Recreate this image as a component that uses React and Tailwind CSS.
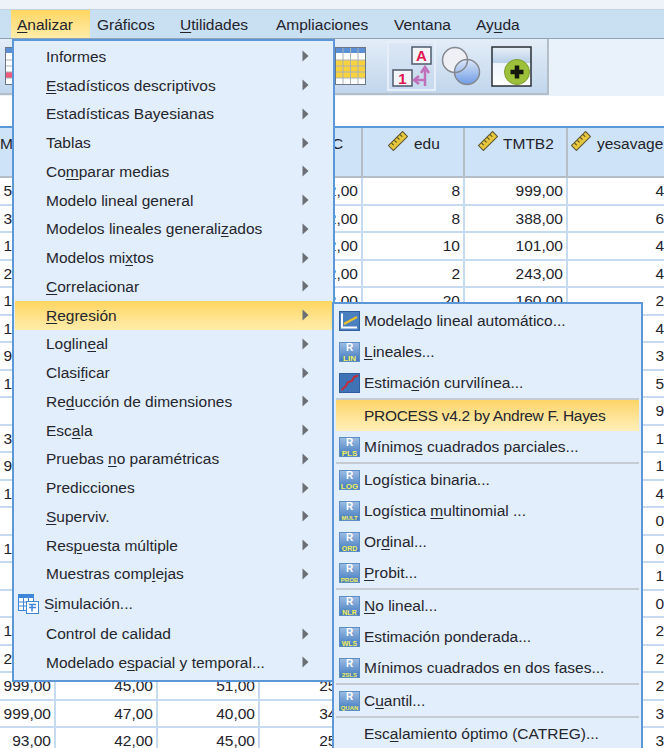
import React from 'react';

const FONT = "font-['Liberation_Sans',Arial,sans-serif]";

const MENU_BAR = [
  { label: '&Analizar', cls: 'w-[79px] pl-[6px] bg-gradient-to-b from-[#ffd65e] to-[#ffecaa]' },
  { label: 'Gráficos', cls: 'w-[83px] pl-[7px]' },
  { label: '&Utilidades', cls: 'w-[96px] pl-[7px]' },
  { label: 'Ampliaciones', cls: 'w-[118px] pl-[7px]' },
  { label: 'Ventana', cls: 'w-[82px] pl-[7px]' },
  { label: 'Ay&uda', cls: 'w-[80px] pl-[7px]' },
];

const ANALYZE_ITEMS = [
  { label: 'Informes' },
  { label: '&Estadísticos descriptivos' },
  { label: 'Estadísticas Bayesianas' },
  { label: 'Tablas' },
  { label: 'Co&mparar medias' },
  { label: 'Modelo lineal general' },
  { label: 'Modelos lineales generali&zados' },
  { label: 'Modelos mi&xtos' },
  { label: '&Correlacionar' },
  { label: '&Regresión', active: true },
  { label: 'Loglin&eal' },
  { label: 'Clasi&ficar' },
  { label: 'Re&ducción de dimensiones' },
  { label: 'Esc&ala' },
  { label: 'Pruebas &no paramétricas' },
  { label: 'Predicciones' },
  { label: '&Superviv.' },
  { label: 'Res&puesta múltiple' },
  { label: 'Muestras comp&lejas' },
  { label: 'S&imulación...', simulation: true },
  { label: 'Control de calidad' },
  { label: 'Modelado e&spacial y temporal...' },
];

const REGRESSION_ITEMS = [
  { label: 'Modela&do lineal automático...', icon: 'auto' },
  { label: '&Lineales...', icon: 'LIN', big: true },
  { label: 'Estima&ción curvilínea...', icon: 'curve' },
  { sep: true },
  { label: 'PROCESS v4.2 by Andrew F. Hayes', active: true },
  { label: 'Mínimo&s cuadrados parciales...', icon: 'PLS', big: true },
  { sep: true },
  { label: 'Logística binaria...', icon: 'LOG', big: true },
  { label: 'Logística &multinomial ...', icon: 'MULT' },
  { label: 'Or&dinal...', icon: 'ORD' },
  { label: '&Probit...', icon: 'PROB' },
  { sep: true },
  { label: '&No lineal...', icon: 'NLR' },
  { label: 'Estimación ponderada...', icon: 'WLS' },
  { label: 'Mínimos cuadrados en dos fases...', icon: '2SLS' },
  { sep: true },
  { label: 'C&uantil...', icon: 'QUAN' },
  { sep: true },
  { label: 'Esc&alamiento óptimo (CATREG)...' },
];

// first column, then the three columns that show under/after the menus
const ROWS = [
  ['512,00', '', '', '22,00', '8', '999,00', '4'],
  ['388,00', '', '', '22,00', '8', '388,00', '6'],
  ['101,00', '', '', '22,00', '10', '101,00', '4'],
  ['243,00', '', '', '22,00', '2', '243,00', '4'],
  ['160,00', '', '', '22,00', '20', '160,00', '2'],
  ['120,00', '', '', '', '', '', '4'],
  ['999,00', '', '', '', '', '', '3'],
  ['100,00', '', '', '', '', '', '5'],
  ['', '', '', '', '', '', '9'],
  ['300,00', '', '', '', '', '', '1'],
  ['999,00', '', '', '', '', '', '1'],
  ['100,00', '', '', '', '', '', '4'],
  ['', '', '', '', '', '', '0'],
  ['100,00', '', '', '', '', '', '0'],
  ['', '', '', '', '', '', '1'],
  ['', '', '', '', '', '', '0'],
  ['100,00', '', '', '', '', '', '2'],
  ['200,00', '', '', '', '', '', '2'],
  ['999,00', '45,00', '51,00', '25,00', '', '', '2'],
  ['999,00', '47,00', '40,00', '34,00', '', '', '3'],
  ['93,00', '42,00', '45,00', '25,00', '', '', '3'],
];

const COL_WIDTHS = ['w-[56px]', 'w-[102px]', 'w-[102px]', 'w-[103px]', 'w-[102px]', 'w-[103px]', 'w-[101px]'];

// "&" marks the mnemonic letter, same as the original menu resource strings
const Mnemonic = ({ text }) => {
  const idx = text.indexOf('&');
  if (idx < 0) return <span>{text}</span>;
  return (
    <span>
      {text.slice(0, idx)}
      <span className="underline underline-offset-[2px] decoration-1">{text[idx + 1]}</span>
      {text.slice(idx + 2)}
    </span>
  );
};

const Arrow = () => (
  <svg width="7" height="12" viewBox="0 0 7 12" className="shrink-0">
    <path d="M0.5 0.5 L6.5 6 L0.5 11.5 Z" fill="#6b6f75" />
  </svg>
);

const Ruler = () => (
  <svg width="20" height="20" viewBox="0 0 20 20" className="shrink-0">
    <g transform="rotate(-45 10 10)">
      <rect x="0" y="6.5" width="20" height="7" fill="#e6c63c" stroke="#5a5432" strokeWidth="1" />
      <path d="M4 7v3M8 7v3M12 7v3M16 7v3" stroke="#4a4526" strokeWidth="1" />
    </g>
  </svg>
);

const RIcon = ({ code, big }) => (
  <svg width="21" height="20" viewBox="0 0 21 20" className="shrink-0">
    <defs>
      <linearGradient id="rblue" x1="0" y1="0" x2="0" y2="1">
        <stop offset="0" stopColor="#9dbde3" />
        <stop offset="1" stopColor="#3f78bd" />
      </linearGradient>
    </defs>
    <rect x="0.5" y="0.5" width="20" height="19" fill="url(#rblue)" stroke="#5c8dc4" />
    <text x="10.5" y="9" textAnchor="middle" fontSize="10" fontWeight="700" fill="#ffffff" fontFamily="Liberation Sans">R</text>
    <text
      x="10.5"
      y="18.5"
      textAnchor="middle"
      fontSize={code.length > 3 ? 6 : big ? 8 : 7}
      fontWeight="700"
      fill="#f4f05a"
      fontFamily="Liberation Sans"
    >
      {code}
    </text>
  </svg>
);

const AutoIcon = () => (
  <svg width="21" height="20" viewBox="0 0 21 20" className="shrink-0">
    <rect x="0.5" y="0.5" width="20" height="19" fill="#4a7fc0" stroke="#2f5f9e" />
    <path d="M3 2.5v14h15" fill="none" stroke="#ffffff" strokeWidth="2" />
    <path d="M5 13 L18 6" stroke="#e8c22a" strokeWidth="2.5" />
  </svg>
);

const CurveIcon = () => (
  <svg width="21" height="20" viewBox="0 0 21 20" className="shrink-0">
    <rect x="0.5" y="0.5" width="20" height="19" fill="#3f73b5" stroke="#2f5f9e" />
    <path d="M2.5 17 L7 13 L9 9 L13 8 L15 4 L19 2.5" fill="none" stroke="#c22c3a" strokeWidth="2" />
  </svg>
);

const SimulationIcon = () => (
  <svg width="21" height="20" viewBox="0 0 21 20" className="shrink-0">
    <rect x="0.5" y="0.5" width="15" height="16" fill="#ffffff" stroke="#3f86d8" />
    <rect x="0.5" y="0.5" width="15" height="3.5" fill="#3f86d8" />
    <path d="M5.5 1v15M10.5 1v15M1 8h14M1 12h14" stroke="#3f86d8" strokeWidth="1" />
    <rect x="8.5" y="7.5" width="12" height="12" fill="#ffffff" stroke="#3f86d8" />
    <path d="M11 10.5h7M11 13.5h7M14 10.5v7" stroke="#3f86d8" strokeWidth="1.5" />
  </svg>
);

const TableIcon = ({ rowColor, rows }) => (
  <svg width="31" height="38" viewBox="0 0 31 38" className="shrink-0">
    <rect x="0.5" y="0.5" width="30" height="37" fill="#ffffff" stroke="#6b7785" />
    <rect x="1" y="1" width="29" height="5" fill="#5b8fd6" />
    {rows.map((y) => (
      <rect key={y} x="1" y={y} width="29" height="6" fill={rowColor} />
    ))}
    <path d="M8 1v36M15.5 1v36M23 1v36M1 13h29M1 19h29M1 25h29M1 31h29" stroke="#a9b1ba" strokeWidth="1" />
  </svg>
);

const CaseIcon = () => (
  <svg width="41" height="41" viewBox="0 0 41 41">
    <rect x="21" y="1" width="19" height="17" fill="#f2f4f8" stroke="#4d5a6b" strokeWidth="1.5" />
    <text x="30.5" y="15" textAnchor="middle" fontSize="15" fontWeight="700" fill="#e0164f" fontFamily="Liberation Sans">A</text>
    <rect x="2" y="24" width="19" height="16" fill="#f2f4f8" stroke="#4d5a6b" strokeWidth="1.5" />
    <text x="11.5" y="37.5" textAnchor="middle" fontSize="15" fontWeight="700" fill="#e0164f" fontFamily="Liberation Sans">1</text>
    <path d="M34 40 V24 M30 27 L34 21 L38 27 M34 34 H25 M28 30 L23 34 L28 38" fill="none" stroke="#c070b8" strokeWidth="2.5" />
  </svg>
);

const CirclesIcon = () => (
  <svg width="40" height="40" viewBox="0 0 40 40">
    <defs>
      <linearGradient id="venn" x1="0" y1="0" x2="0" y2="1">
        <stop offset="0" stopColor="#dbe6f7" />
        <stop offset="1" stopColor="#6f9ce6" />
      </linearGradient>
    </defs>
    <circle cx="14" cy="14" r="12.5" fill="#eef0f6" />
    <circle cx="26" cy="26" r="12.5" fill="url(#venn)" stroke="#85888e" strokeWidth="1.5" />
    <circle cx="14" cy="14" r="12.5" fill="none" stroke="#85888e" strokeWidth="1.5" />
  </svg>
);

const PlusIcon = () => (
  <svg width="41" height="41" viewBox="0 0 41 41">
    <defs>
      <linearGradient id="plusBg" x1="0" y1="0" x2="0" y2="1">
        <stop offset="0" stopColor="#e8f0f8" />
        <stop offset="0.4" stopColor="#b9d0e8" />
        <stop offset="0.42" stopColor="#eef4fa" />
        <stop offset="1" stopColor="#ffffff" />
      </linearGradient>
    </defs>
    <rect x="1" y="1" width="39" height="39" fill="url(#plusBg)" stroke="#2a2f36" strokeWidth="1.5" />
    <circle cx="26" cy="26" r="12.5" fill="#9cc03a" stroke="#7d9c2a" />
    <path d="M26 19.5v13M19.5 26h13" stroke="#14180c" strokeWidth="4.5" />
  </svg>
);

const Toolbar = () => (
  <div className="h-[57px] flex bg-[#e9f1fa]">
    <div className="w-[549px] h-[56px] relative flex items-center overflow-hidden bg-gradient-to-b from-[#e3edf8] to-[#c1d6ec] border-r-2 border-b-2 border-[#b3bec9]">
      <div className="ml-[5px] mr-[299px]">
        <TableIcon rowColor="#f0577a" rows={[25]} />
      </div>
      <TableIcon rowColor="#f7d23c" rows={[13, 19, 25]} />
      <div className="ml-[21px] w-[49px] h-[50px] flex items-center justify-center border-2 border-[#e6eff9] bg-gradient-to-b from-[#dbe7f5] to-[#c6d9ee]">
        <CaseIcon />
      </div>
      <div className="ml-[5px]">
        <CirclesIcon />
      </div>
      <div className="ml-[10px]">
        <PlusIcon />
      </div>
    </div>
  </div>
);

const HEAD = 'shrink-0 border-b-2 border-[#b4bcc5] bg-[#cfe3f8]';

const DataGrid = () => (
  <div className="border-t-2 border-[#5a97d8]">
    <div className="flex h-[50px] bg-white">
      <div className={`${COL_WIDTHS[0]} ${HEAD} border-r-2 pt-[4px] overflow-hidden`}>M</div>
      <div className={`${COL_WIDTHS[1]} ${HEAD} border-r-2`} />
      <div className={`${COL_WIDTHS[2]} ${HEAD} border-r-2`} />
      <div className={`${COL_WIDTHS[3]} ${HEAD} border-r-2 pt-[4px] pl-[72px]`}>C</div>
      <div className={`${COL_WIDTHS[4]} ${HEAD} border-r-2 pt-[3px] pl-[25px] flex gap-[6px]`}>
        <Ruler /><span className="pt-[1px]">edu</span>
      </div>
      <div className={`${COL_WIDTHS[5]} ${HEAD} border-r-2 pt-[3px] pl-[13px] flex gap-[5px]`}>
        <Ruler /><span className="pt-[1px]">TMTB2</span>
      </div>
      <div className={`${COL_WIDTHS[6]} ${HEAD} pt-[3px] pl-[3px] flex gap-[6px]`}>
        <Ruler /><span className="pt-[1px] whitespace-nowrap">yesavage</span>
      </div>
    </div>
    {ROWS.map((row, i) => (
      <div key={i} className="flex h-[27.5px] bg-white">
        {row.map((val, j) => (
          <div
            key={j}
            className={`${COL_WIDTHS[j]} shrink-0 border-r-2 border-b-2 border-[#c6daf0] flex items-center justify-end pr-[3px] overflow-hidden whitespace-nowrap`}
          >
            {val}
          </div>
        ))}
      </div>
    ))}
  </div>
);

const AnalyzeMenu = () => (
  <div className="absolute left-[12px] top-[39px] w-[323px] h-[643px] border-2 border-[#5c97d8] bg-[#e2eefb] pt-[1px] pl-[1px] text-[15.5px] text-[#26262e]">
    {ANALYZE_ITEMS.map((item) => (
      <div
        key={item.label}
        className={`flex items-center pr-[23px] w-[317px] ${item.simulation ? 'h-[31px] pl-[3px]' : 'h-[28.75px] pl-[31px]'} ${
          item.active ? 'bg-gradient-to-b from-[#ffd65e] to-[#ffecaa]' : ''
        }`}
      >
        {item.simulation && <span className="mr-[5px]"><SimulationIcon /></span>}
        <span className="flex-1 whitespace-nowrap"><Mnemonic text={item.label} /></span>
        {!item.simulation && <Arrow />}
      </div>
    ))}
  </div>
);

const RegressionMenu = () => (
  <div className="absolute left-[332px] top-[302px] w-[311px] h-[460px] border-2 border-[#5c97d8] bg-[#e2eefb] pt-[1px] pl-[2px] pr-[2px] text-[15.5px] text-[#26262e]">
    {REGRESSION_ITEMS.map((item, i) =>
      item.sep ? (
        <div key={i} className="h-[2px] bg-[#c5cbd2] mx-0" />
      ) : (
        <div
          key={i}
          className={`h-[31px] flex items-center pl-[3px] gap-[4px] whitespace-nowrap ${
            item.active ? 'bg-gradient-to-b from-[#fdd567] to-[#fff0b8] tracking-[-0.3px]' : ''
          }`}
        >
          <span className="w-[21px] shrink-0 flex">
            {item.icon === 'auto' && <AutoIcon />}
            {item.icon === 'curve' && <CurveIcon />}
            {item.icon && item.icon !== 'auto' && item.icon !== 'curve' && <RIcon code={item.icon} big={item.big} />}
          </span>
          <Mnemonic text={item.label} />
        </div>
      )
    )}
  </div>
);

const App = () => {
  return (
    <div className={`relative w-[664px] h-[748px] overflow-hidden bg-white text-[15.5px] text-[#23232b] ${FONT}`}>
      <div className="h-[10px] bg-[#eef2f9] border-b border-[#c4d2e0]" />
      <div className="h-[29px] flex items-stretch bg-[#c9dff2] border-b border-[#8fa3b8] text-[15.5px] pl-[11px]">
        {MENU_BAR.map((m) => (
          <div key={m.label} className={`${m.cls} flex items-center whitespace-nowrap pt-[1px]`}>
            <Mnemonic text={m.label} />
          </div>
        ))}
      </div>
      <Toolbar />
      <div className="h-[30px] bg-white" />
      <DataGrid />
      <AnalyzeMenu />
      <RegressionMenu />
    </div>
  );
};

export default App;
